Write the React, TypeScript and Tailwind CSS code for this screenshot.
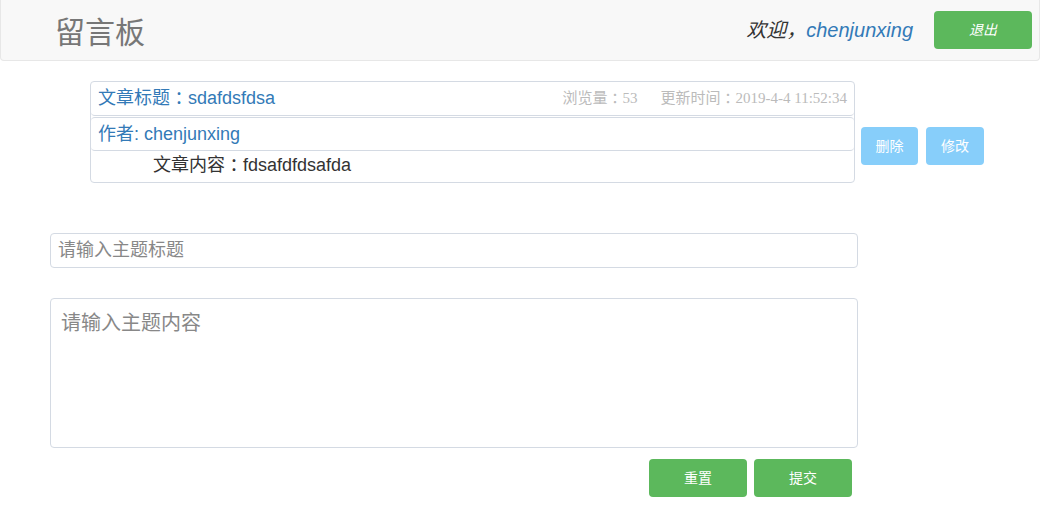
import React from "react";

const Colon = () => (
  <span className="ml-[0.25em] mr-[0.25em] [font-feature-settings:'halt']">：</span>
);

export default function App() {
  const sans = { fontFamily: '"Liberation Sans", "Noto Sans CJK SC", sans-serif' };
  return (
    <div className="w-[1040px] h-[524px] bg-white text-[#333]" style={sans}>
      <header className="h-[61px] bg-[#f8f8f8] border-x border-b border-[#e7e7e7] rounded-b-[4px] flex items-center justify-between pl-[54px] pr-[7px]">
        <div className="text-[30px] leading-none text-[#777] pt-[6px]">留言板</div>
        <div className="flex items-center">
          <div className="text-[20px] italic leading-none">
            <span className="text-[#333]">欢迎，</span>
            <span className="text-[#337ab7]">chenjunxing</span>
          </div>
          <button className="ml-[21px] w-[98px] h-[38px] bg-[#5cb85c] rounded-[4px] text-white italic text-[14px] flex items-center justify-center">
            退出
          </button>
        </div>
      </header>

      <div className="flex ml-[90px] mt-[20px] gap-[6px]">
        <div className="w-[765px] h-[102px] border border-[#d4dae3] rounded-[4px] flex flex-col">
          <div className="shrink-0 h-[34px] border-b border-[#d4dae3] rounded-[4px] flex items-center justify-between pl-[7px] pr-[7px]">
            <span className="text-[18px] text-[#337ab7]">
              文章标题<Colon />sdafdsfdsa
            </span>
            <span className="text-[15px] text-[#bbb]" style={{ fontFamily: '"Liberation Serif", "Noto Sans CJK SC", serif' }}>
              浏览量<Colon />53<span className="inline-block w-[23px]" />更新时间<Colon />2019-4-4 11:52:34
            </span>
          </div>
          <div className="shrink-0 h-[34px] mt-[1px] border-t border-b border-[#d4dae3] rounded-[4px] flex items-center pl-[7px]">
            <span className="text-[18px] text-[#337ab7]">作者: chenjunxing</span>
          </div>
          <div className="flex-1 min-h-0 flex items-center pl-[62px] pb-[4px] leading-none">
            <span className="text-[18px] text-[#333]">
              文章内容<Colon />fdsafdfdsafda
            </span>
          </div>
        </div>
        <div className="mt-[46px] flex gap-[8px]">
          <button className="w-[57px] h-[38px] bg-[#87cefa] rounded-[4px] text-white text-[14px]">删除</button>
          <button className="w-[58px] h-[38px] bg-[#87cefa] rounded-[4px] text-white text-[14px]">修改</button>
        </div>
      </div>

      <div className="ml-[50px] w-[808px]">
        <input
          className="mt-[50px] block w-full h-[35px] border border-[#d4dae3] rounded-[4px] px-[7px] text-[18px] placeholder:text-[#888] outline-none"
          placeholder="请输入主题标题"
        />
        <textarea
          className="mt-[30px] block w-full h-[150px] border border-[#d4dae3] rounded-[4px] px-[10px] pt-[10px] text-[20px] leading-[28px] placeholder:text-[#888] outline-none resize-none"
          placeholder="请输入主题内容"
        />
        <div className="mt-[11px] flex justify-end gap-[7px] pr-[6px]">
          <button className="w-[98px] h-[38px] bg-[#5cb85c] rounded-[4px] text-white text-[14px]">重置</button>
          <button className="w-[98px] h-[38px] bg-[#5cb85c] rounded-[4px] text-white text-[14px]">提交</button>
        </div>
      </div>
    </div>
  );
}
